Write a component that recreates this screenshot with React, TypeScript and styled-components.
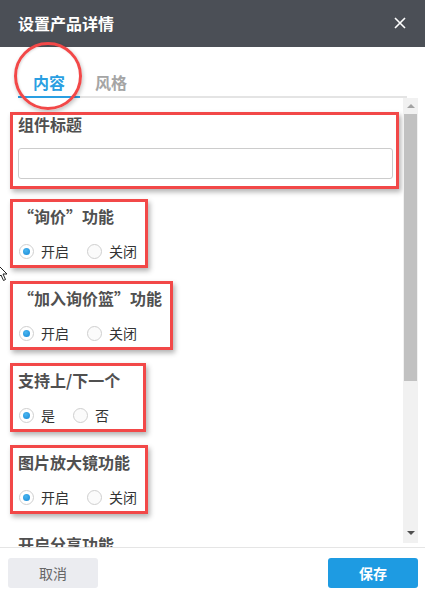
import React from 'react';
import styled, { createGlobalStyle, css } from 'styled-components';

const GlobalStyle = createGlobalStyle`
  html, body {
    margin: 0;
    padding: 0;
    background: #fff;
  }
  body {
    font-family: "Noto Sans CJK SC", "Noto Sans", sans-serif;
  }
`;

type Option = { label: string; checked?: boolean };
type Setting = { title: string; options: Option[] };

const settings: Setting[] = [
  { title: '“询价”功能', options: [{ label: '开启', checked: true }, { label: '关闭' }] },
  { title: '“加入询价篮”功能', options: [{ label: '开启', checked: true }, { label: '关闭' }] },
  { title: '支持上/下一个', options: [{ label: '是', checked: true }, { label: '否' }] },
  { title: '图片放大镜功能', options: [{ label: '开启', checked: true }, { label: '关闭' }] },
];

const App = () => {
  return (
    <Dialog>
      <GlobalStyle />
      <Header>
        <h1>设置产品详情</h1>
        <CloseIcon viewBox="0 0 12 12">
          <path d="M1 1 L11 11 M11 1 L1 11" />
        </CloseIcon>
      </Header>

      <TabBar>
        <Tab $active>内容</Tab>
        <Tab>风格</Tab>
        <Ring />
      </TabBar>

      <Body>
        <Content>
          <TitleGroup $marked>
            <Label>组件标题</Label>
            <Input />
          </TitleGroup>

          {settings.map((s) => (
            <Group key={s.title} $marked>
              <Label>{s.title}</Label>
              <RadioRow>
                {s.options.map((o) => (
                  <RadioItem key={o.label}>
                    <RadioDot $checked={o.checked} />
                    {o.label}
                  </RadioItem>
                ))}
              </RadioRow>
            </Group>
          ))}

          {/* next setting, scrolled mostly out of view */}
          <Group>
            <Label>开启分享功能</Label>
          </Group>
        </Content>

        <Scrollbar>
          <ArrowUp />
          <Thumb />
          <ArrowDown />
        </Scrollbar>

        <Cursor viewBox="0 0 12 18">
          <path d="M1 1 L1 14 L4 11 L6.5 16.5 L8.5 15.5 L6 10 L10 10 Z" />
        </Cursor>
      </Body>

      <Footer>
        <Button>取消</Button>
        <Button $primary>保存</Button>
      </Footer>
    </Dialog>
  );
};

const Dialog = styled.div`
  width: 425px;
  height: 594px;
  display: flex;
  flex-direction: column;
  background: #fff;
  overflow: hidden;
`;

const Header = styled.div`
  height: 47px;
  flex-shrink: 0;
  background: #4b4f56;
  display: flex;
  align-items: center;
  justify-content: space-between;
  padding: 0 19px 2px 18px;
  box-sizing: border-box;
  h1 {
    margin: 0;
    color: #fff;
    font-size: 16px;
    font-weight: 700;
    line-height: 20px;
  }
`;

const CloseIcon = styled.svg`
  width: 12px;
  height: 12px;
  stroke: #fff;
  stroke-width: 1.6;
  fill: none;
`;

const TabBar = styled.div`
  position: relative;
  display: flex;
  margin: 0 18px 0 18px;
  padding-top: 25px;
  border-bottom: 2px solid #e4e4e4;
  flex-shrink: 0;
`;

const Tab = styled.div<{ $active?: boolean }>`
  width: 62px;
  text-align: center;
  font-size: 16px;
  font-weight: 700;
  line-height: 20px;
  padding-bottom: 4px;
  margin-bottom: -2px;
  color: ${(p) => (p.$active ? '#2a9fe2' : '#a5a5a5')};
  border-bottom: 2px solid ${(p) => (p.$active ? '#2a9fe2' : 'transparent')};
`;

const Ring = styled.div`
  position: absolute;
  left: -4px;
  top: -5px;
  width: 62px;
  height: 62px;
  border: 3px solid #f24848;
  border-radius: 50%;
  box-shadow: 1px 2px 4px rgba(0, 0, 0, 0.25), inset 1px 1px 2px rgba(0, 0, 0, 0.12);
  pointer-events: none;
`;

const Body = styled.div`
  position: relative;
  flex: 1;
  display: flex;
  min-height: 0;
  padding-right: 7px;
`;

const Content = styled.div`
  flex: 1;
  overflow: hidden;
  padding: 14px 4px 0 10px;
  display: flex;
  flex-direction: column;
  align-items: flex-start;
`;

const marked = css`
  border-color: #f24848;
  box-shadow: 2px 3px 5px rgba(0, 0, 0, 0.3);
`;

const Group = styled.div<{ $marked?: boolean }>`
  display: flex;
  flex-direction: column;
  flex-shrink: 0;
  box-sizing: border-box;
  min-width: 136px;
  border: 3px solid transparent;
  padding: 5px 8px 4px 5px;
  margin-bottom: 13px;
  ${(p) => p.$marked && marked}
`;

const TitleGroup = styled(Group)`
  align-self: stretch;
  padding: 0 3px 7px 5px;
  margin-bottom: 10px;
`;

const Label = styled.div`
  font-size: 16px;
  font-weight: 700;
  line-height: 18px;
  color: #505050;
  white-space: nowrap;
`;

const Input = styled.div`
  margin-top: 15px;
  height: 31px;
  box-sizing: border-box;
  border: 1px solid #ccc;
  border-radius: 3px;
  background: #fff;
`;

const RadioRow = styled.div`
  display: flex;
  align-items: center;
  margin-top: 16px;
  height: 20px;
`;

const RadioItem = styled.label`
  display: flex;
  align-items: center;
  font-size: 14px;
  color: #333;
  margin-right: 17px;
  white-space: nowrap;
  &:last-child {
    margin-right: 0;
  }
`;

const RadioDot = styled.span<{ $checked?: boolean }>`
  width: 15px;
  height: 15px;
  box-sizing: border-box;
  border-radius: 50%;
  border: 1px solid #cfcfcf;
  background: ${(p) => (p.$checked ? '#fff' : '#fbfbfb')};
  margin: 0 7px 0 1px;
  display: flex;
  align-items: center;
  justify-content: center;
  &::after {
    content: '';
    width: 7px;
    height: 7px;
    border-radius: 50%;
    background: radial-gradient(circle at 40% 35%, #4ab6f0, #1788d6);
    display: ${(p) => (p.$checked ? 'block' : 'none')};
  }
`;

const Scrollbar = styled.div`
  width: 15px;
  flex-shrink: 0;
  background: #f1f1f1;
  display: flex;
  flex-direction: column;
  align-items: center;
  margin-bottom: 4px;
`;

const ArrowUp = styled.div`
  margin-top: 6px;
  width: 0;
  height: 0;
  border-left: 4px solid transparent;
  border-right: 4px solid transparent;
  border-bottom: 4px solid #a3a3a3;
`;

const Thumb = styled.div`
  margin-top: 6px;
  width: 13px;
  height: 267px;
  background: #c1c1c1;
`;

const ArrowDown = styled.div`
  margin-top: auto;
  margin-bottom: 8px;
  width: 0;
  height: 0;
  border-left: 4px solid transparent;
  border-right: 4px solid transparent;
  border-top: 4px solid #505050;
`;

const Cursor = styled.svg`
  position: absolute;
  left: -3px;
  top: 166px;
  width: 12px;
  height: 18px;
  fill: #fff;
  stroke: #222;
  stroke-width: 1;
`;

const Footer = styled.div`
  height: 47px;
  flex-shrink: 0;
  border-top: 1px solid #e5e5e5;
  box-sizing: border-box;
  display: flex;
  justify-content: space-between;
  padding: 10px 7px 0 8px;
`;

const Button = styled.button<{ $primary?: boolean }>`
  width: 90px;
  height: 30px;
  border: none;
  border-radius: 3px;
  font-family: inherit;
  font-size: 14px;
  font-weight: ${(p) => (p.$primary ? 700 : 400)};
  color: ${(p) => (p.$primary ? '#fff' : '#666')};
  background: ${(p) => (p.$primary ? '#1e9be2' : '#ebecf0')};
`;

export default App;
